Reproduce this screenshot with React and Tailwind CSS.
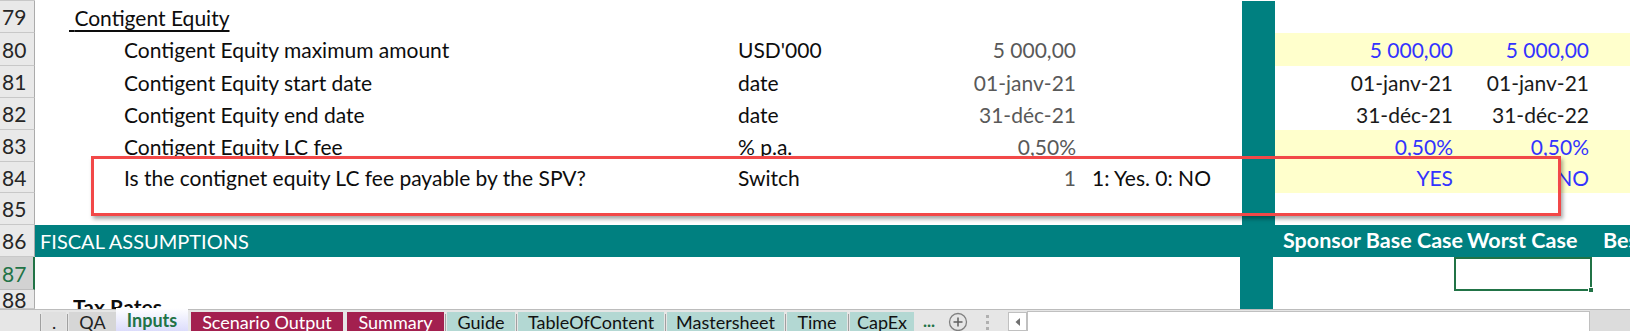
import React from "react";

const F = { fontFamily: "Lato, 'Open Sans', sans-serif" };

function Header({ num, h, sel }) {
  return (
    <div
      className={
        "w-[35px] shrink-0 flex items-center pl-[2px] border-b border-r text-[21px] leading-none overflow-hidden " +
        (sel
          ? "bg-[#d2d2d2] text-[#217346] border-b-[#bdbdbd] border-r-[#217346] border-r-2"
          : "bg-[#e9e9e9] text-[#262626] border-b-[#c8c8c8] border-r-[#ababab]")
      }
      style={{ height: h }}
    >
      {num}
    </div>
  );
}

function DataRow({ num, h = 32, sel, label, labelTop, unit, val, note, g, hh, yellow, blue }) {
  const rc = blue ? "text-[#3333ff]" : "text-[#1a1a1a]";
  return (
    <div className="flex" style={{ height: h }}>
      <Header num={num} h={h} sel={sel} />
      <div className="flex text-[21px] leading-none">
        <div className="w-[34px] shrink-0" />
        <div className="w-[55px] shrink-0 flex items-center whitespace-nowrap overflow-visible">
          {labelTop && (
            <span className="underline decoration-[1.5px] underline-offset-[4px] text-[#0d0d0d]">
              {"\u00a0"}
              {labelTop}
            </span>
          )}
        </div>
        <div className="w-[614px] shrink-0 flex items-center whitespace-nowrap text-[#0d0d0d]">{label}</div>
        <div className="w-[220px] shrink-0 flex items-center whitespace-nowrap text-[#0d0d0d]">{unit}</div>
        <div className="w-[122px] shrink-0 flex items-center justify-end pr-[4px] whitespace-nowrap text-[#595959]">{val}</div>
        <div className="w-[162px] shrink-0 flex items-center pl-[12px] whitespace-nowrap text-[#0d0d0d]">{note}</div>
        <div className="w-[33px] shrink-0 bg-[#008080]" />
        <div className={"w-[181px] shrink-0 flex items-center justify-end pr-[3px] whitespace-nowrap " + rc + (yellow ? " bg-[#ffffcc]" : "")}>{g}</div>
        <div className={"w-[138px] shrink-0 flex items-center justify-end pr-[5px] whitespace-nowrap " + rc + (yellow ? " bg-[#ffffcc]" : "")}>{hh}</div>
        <div className={"w-[36px] shrink-0" + (yellow ? " bg-[#ffffcc]" : "")} />
      </div>
    </div>
  );
}

function Tab({ w, bg, text, children, bold, active }) {
  return (
    <div
      className={
        "shrink-0 flex items-center justify-center whitespace-nowrap text-[18px] " +
        (active ? "mt-[-2px] h-[25px] " : "mt-[2px] h-[21px] ") +
        bg +
        " " +
        text +
        (bold ? " font-bold" : "")
      }
      style={{ width: w }}
    >
      {children}
    </div>
  );
}

function Sep() {
  return <div className="w-[1px] h-[17px] mt-[4px] mx-[1px] bg-[#a0a0a0] shrink-0" />;
}

export default function App() {
  return (
    <div className="w-[1630px] h-[331px] overflow-hidden bg-white relative" style={F}>
      <div className="flex h-[1px]">
        <div className="w-[35px] bg-[#c8c8c8]" />
      </div>
      <DataRow num="79" labelTop="Contigent Equity" />
      <DataRow num="80" h={33} label="Contigent Equity maximum amount" unit="USD'000" val="5 000,00" g="5 000,00" hh="5 000,00" yellow blue />
      <DataRow num="81" label="Contigent Equity start date" unit="date" val="01-janv-21" g="01-janv-21" hh="01-janv-21" />
      <DataRow num="82" label="Contigent Equity end date" unit="date" val="31-déc-21" g="31-déc-21" hh="31-déc-22" />
      <DataRow num="83" label="Contigent Equity LC fee" unit="% p.a." val="0,50%" g="0,50%" hh="0,50%" yellow blue />
      <DataRow num="84" h={31} label="Is the contignet equity LC fee payable by the SPV?" unit="Switch" val="1" note="1: Yes. 0: NO" g="YES" hh="NO" yellow blue />
      <DataRow num="85" />
      {/* Row 86 header band */}
      <div className="flex h-[32px]">
        <Header num="86" h={32} />
        <div className="flex-1 bg-[#008080] text-white flex items-center whitespace-nowrap leading-none">
          <div className="w-[1240px] shrink-0 pl-[5px] text-[20px]">FISCAL ASSUMPTIONS</div>
          <div className="w-[192px] shrink-0 pl-[8px] font-bold text-[21.5px]">Sponsor Base Case</div>
          <div className="w-[136px] shrink-0 font-bold text-[21.5px]">Worst Case</div>
          <div className="font-bold text-[21.5px]">Best Case</div>
        </div>
      </div>
      {/* Row 87 */}
      <div className="flex h-[33px]">
        <Header num="87" h={33} sel />
        <div className="flex">
          <div className="w-[1205px] shrink-0" />
          <div className="w-[33px] shrink-0 bg-[#008080]" />
          <div className="w-[181px] shrink-0" />
          <div className="w-[138px] h-[34px] shrink-0 border-2 border-[#217346] relative">
            <div className="absolute right-[-4px] bottom-[-4px] w-[6px] h-[6px] bg-[#217346] border border-white" />
          </div>
        </div>
      </div>
      {/* Row 88 */}
      <div className="flex h-[19px] overflow-hidden">
        <Header num="88" h={19} />
        <div className="flex h-[19px]">
          <div className="w-[38px] shrink-0" />
          <div className="w-[1167px] h-[19px] overflow-hidden shrink-0 font-bold text-[21px] leading-none pt-[6px] text-[#0d0d0d]">Tax Rates</div>
          <div className="w-[33px] shrink-0 bg-[#008080]" />
        </div>
      </div>
      {/* Tab bar */}
      <div className="flex h-[23px] bg-[#e6e6e6] border-t border-[#bcbcbc] items-start">
        <div className="w-[39px] shrink-0" />
        <Sep />
        <Tab w={24} bg="bg-[#e0e0e0]" text="text-[#222]">.</Tab>
        <Sep />
        <Tab w={47} bg="bg-[#d6d6d6]" text="text-[#222]">QA</Tab>
        <Tab w={72} bg="bg-gradient-to-b from-[#ffffff] to-[#d9d9fb]" text="text-[#217346]" bold active>Inputs</Tab>
        <div className="w-[3px] shrink-0" />
        <Tab w={152} bg="bg-[#a3204f]" text="text-white">Scenario Output</Tab>
        <div className="w-[4px] shrink-0" />
        <Tab w={97} bg="bg-[#a3204f]" text="text-white">Summary</Tab>
        <Sep />
        <Tab w={68} bg="bg-[#b3d8d3]" text="text-[#111]">Guide</Tab>
        <Sep />
        <Tab w={146} bg="bg-[#b3d8d3]" text="text-[#111]">TableOfContent</Tab>
        <Sep />
        <Tab w={117} bg="bg-[#b3d8d3]" text="text-[#111]">Mastersheet</Tab>
        <Sep />
        <Tab w={60} bg="bg-[#b3d8d3]" text="text-[#111]">Time</Tab>
        <Sep />
        <Tab w={64} bg="bg-[#b3d8d3]" text="text-[#111]">CapEx</Tab>
        <div className="w-[30px] shrink-0 flex justify-center text-[#217346] text-[17px] font-bold mt-[1px] leading-[20px]">...</div>
        <div className="w-[28px] shrink-0 flex justify-center mt-[2px]">
          <svg width="20" height="20" viewBox="0 0 20 20">
            <circle cx="10" cy="10" r="8.5" fill="none" stroke="#808080" strokeWidth="1.3" />
            <path d="M10 5.5v9M5.5 10h9" stroke="#606060" strokeWidth="1.5" />
          </svg>
        </div>
        <div className="w-[30px] shrink-0 flex flex-col items-center gap-[3px] pt-[5px]">
          <div className="w-[3px] h-[3px] bg-[#b0b0b0]" />
          <div className="w-[3px] h-[3px] bg-[#b0b0b0]" />
          <div className="w-[3px] h-[3px] bg-[#b0b0b0]" />
        </div>
        <div className="w-[6px] shrink-0" />
        <div className="w-[19px] h-[19px] mt-[2px] shrink-0 bg-white border border-[#c0c0c0] flex items-center justify-center">
          <svg width="8" height="10" viewBox="0 0 8 10">
            <path d="M6 1L1.5 5 6 9z" fill="#707070" />
          </svg>
        </div>
        <div className="w-[563px] h-[21px] mt-[1px] shrink-0 bg-white border border-[#c0c0c0]" />
        <div className="flex-1 h-full bg-[#dcdcdc]" />
      </div>
      {/* Red highlight rectangle */}
      <div className="absolute left-[91px] top-[156px] w-[1470px] h-[60px] border-[3px] border-[#f24848] shadow-[2px_3px_4px_rgba(0,0,0,0.35)]" />
    </div>
  );
}
